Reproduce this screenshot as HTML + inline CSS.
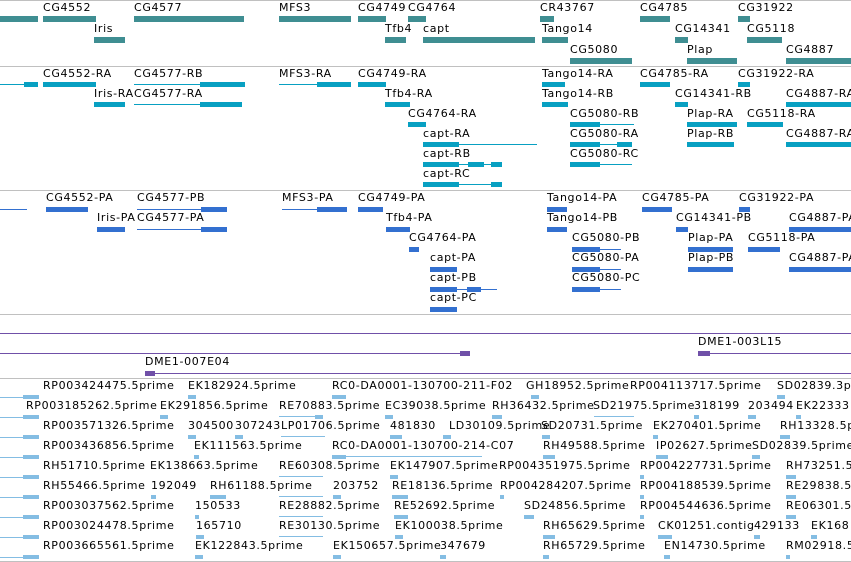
<!DOCTYPE html>
<html><head><meta charset="utf-8"><style>
html,body{margin:0;padding:0;background:#fff;}
#r{position:relative;width:851px;height:562px;overflow:hidden;background:#fff;font-family:"DejaVu Sans","Liberation Sans",sans-serif;font-size:11px;letter-spacing:0.65px;color:#000;}
#r i{position:absolute;font-style:normal;line-height:11px;white-space:nowrap;}
#r b{position:absolute;display:block;}
.g{height:1px;background:#c0c0c0;left:0;width:851px;}
.a{background:#3f8e92;height:6px;}
.c{background:#08a0c2;height:5px;}
.d{background:#3370d0;height:5px;}
.e{background:#84bde3;height:4px;}
.lc{background:#08a0c2;height:1px;}
.ld{background:#3370d0;height:1px;}
.le{background:#84bde3;height:1px;}
.p{background:#7050a8;}
</style></head><body><div id="r">
<b class="g" style="top:0"></b>
<b class="g" style="top:66px"></b>
<b class="g" style="top:190px"></b>
<b class="g" style="top:314px"></b>
<b class="g" style="top:378px"></b>
<b class="g" style="top:561px"></b>

<!-- track1 -->
<i style="left:43px;top:2px">CG4552</i><i style="left:134px;top:2px">CG4577</i><i style="left:279px;top:2px">MFS3</i><i style="left:358px;top:2px">CG4749</i><i style="left:408px;top:2px">CG4764</i><i style="left:540px;top:2px">CR43767</i><i style="left:640px;top:2px">CG4785</i><i style="left:738px;top:2px">CG31922</i>
<b class="a" style="left:0;width:38px;top:16px"></b><b class="a" style="left:43px;width:53px;top:16px"></b><b class="a" style="left:134px;width:110px;top:16px"></b><b class="a" style="left:279px;width:72px;top:16px"></b><b class="a" style="left:358px;width:28px;top:16px"></b><b class="a" style="left:408px;width:18px;top:16px"></b><b class="a" style="left:540px;width:14px;top:16px"></b><b class="a" style="left:640px;width:30px;top:16px"></b><b class="a" style="left:738px;width:12px;top:16px"></b>
<i style="left:94px;top:23px">Iris</i><i style="left:385px;top:23px">Tfb4</i><i style="left:423px;top:23px">capt</i><i style="left:542px;top:23px">Tango14</i><i style="left:675px;top:23px">CG14341</i><i style="left:747px;top:23px">CG5118</i>
<b class="a" style="left:94px;width:31px;top:37px"></b><b class="a" style="left:385px;width:21px;top:37px"></b><b class="a" style="left:423px;width:112px;top:37px"></b><b class="a" style="left:542px;width:26px;top:37px"></b><b class="a" style="left:675px;width:13px;top:37px"></b><b class="a" style="left:747px;width:35px;top:37px"></b>
<i style="left:570px;top:44px">CG5080</i><i style="left:687px;top:44px">Plap</i><i style="left:786px;top:44px">CG4887</i>
<b class="a" style="left:570px;width:62px;top:58px"></b><b class="a" style="left:687px;width:50px;top:58px"></b><b class="a" style="left:786px;width:65px;top:58px"></b>

<!-- track2 -->
<i style="left:43px;top:68px">CG4552-RA</i><i style="left:134px;top:68px">CG4577-RB</i><i style="left:279px;top:68px">MFS3-RA</i><i style="left:358px;top:68px">CG4749-RA</i><i style="left:542px;top:68px">Tango14-RA</i><i style="left:640px;top:68px">CG4785-RA</i><i style="left:738px;top:68px">CG31922-RA</i>
<b class="lc" style="left:0;width:38px;top:84px"></b><b class="c" style="left:24px;width:14px;top:82px"></b><b class="c" style="left:43px;width:53px;top:82px"></b><b class="lc" style="left:134px;width:110px;top:84px"></b><b class="c" style="left:200px;width:45px;top:82px"></b><b class="lc" style="left:279px;width:72px;top:84px"></b><b class="c" style="left:317px;width:34px;top:82px"></b><b class="c" style="left:358px;width:28px;top:82px"></b><b class="c" style="left:542px;width:23px;top:82px"></b><b class="c" style="left:640px;width:30px;top:82px"></b><b class="c" style="left:738px;width:12px;top:82px"></b>
<i style="left:94px;top:88px">Iris-RA</i><i style="left:134px;top:88px">CG4577-RA</i><i style="left:385px;top:88px">Tfb4-RA</i><i style="left:542px;top:88px">Tango14-RB</i><i style="left:675px;top:88px">CG14341-RB</i><i style="left:786px;top:88px">CG4887-RA</i>
<b class="c" style="left:94px;width:31px;top:102px"></b><b class="lc" style="left:134px;width:108px;top:104px"></b><b class="c" style="left:200px;width:42px;top:102px"></b><b class="c" style="left:385px;width:25px;top:102px"></b><b class="c" style="left:542px;width:26px;top:102px"></b><b class="c" style="left:675px;width:13px;top:102px"></b><b class="c" style="left:786px;width:65px;top:102px"></b>
<i style="left:408px;top:108px">CG4764-RA</i><i style="left:570px;top:108px">CG5080-RB</i><i style="left:687px;top:108px">Plap-RA</i><i style="left:747px;top:108px">CG5118-RA</i>
<b class="c" style="left:408px;width:18px;top:122px"></b><b class="lc" style="left:570px;width:64px;top:124px"></b><b class="c" style="left:570px;width:30px;top:122px"></b><b class="c" style="left:687px;width:50px;top:122px"></b><b class="c" style="left:747px;width:36px;top:122px"></b>
<i style="left:423px;top:128px">capt-RA</i><i style="left:570px;top:128px">CG5080-RA</i><i style="left:687px;top:128px">Plap-RB</i><i style="left:786px;top:128px">CG4887-RA</i>
<b class="lc" style="left:423px;width:114px;top:144px"></b><b class="c" style="left:423px;width:36px;top:142px"></b><b class="lc" style="left:570px;width:62px;top:144px"></b><b class="c" style="left:570px;width:30px;top:142px"></b><b class="c" style="left:617px;width:15px;top:142px"></b><b class="c" style="left:687px;width:47px;top:142px"></b><b class="c" style="left:786px;width:65px;top:142px"></b>
<i style="left:423px;top:148px">capt-RB</i><i style="left:570px;top:148px">CG5080-RC</i>
<b class="lc" style="left:423px;width:79px;top:164px"></b><b class="c" style="left:423px;width:36px;top:162px"></b><b class="c" style="left:468px;width:16px;top:162px"></b><b class="c" style="left:491px;width:11px;top:162px"></b><b class="lc" style="left:570px;width:62px;top:164px"></b><b class="c" style="left:570px;width:30px;top:162px"></b>
<i style="left:423px;top:168px">capt-RC</i>
<b class="lc" style="left:423px;width:79px;top:184px"></b><b class="c" style="left:423px;width:36px;top:182px"></b><b class="c" style="left:491px;width:11px;top:182px"></b>

<!-- track3 -->
<i style="left:46px;top:192px">CG4552-PA</i><i style="left:137px;top:192px">CG4577-PB</i><i style="left:282px;top:192px">MFS3-PA</i><i style="left:358px;top:192px">CG4749-PA</i><i style="left:547px;top:192px">Tango14-PA</i><i style="left:642px;top:192px">CG4785-PA</i><i style="left:739px;top:192px">CG31922-PA</i>
<b class="ld" style="left:0;width:27px;top:209px"></b><b class="d" style="left:46px;width:42px;top:207px"></b><b class="ld" style="left:137px;width:90px;top:209px"></b><b class="d" style="left:201px;width:26px;top:207px"></b><b class="ld" style="left:282px;width:65px;top:209px"></b><b class="d" style="left:317px;width:30px;top:207px"></b><b class="d" style="left:358px;width:25px;top:207px"></b><b class="d" style="left:547px;width:20px;top:207px"></b><b class="d" style="left:642px;width:30px;top:207px"></b><b class="d" style="left:739px;width:11px;top:207px"></b>
<i style="left:97px;top:212px">Iris-PA</i><i style="left:137px;top:212px">CG4577-PA</i><i style="left:386px;top:212px">Tfb4-PA</i><i style="left:547px;top:212px">Tango14-PB</i><i style="left:676px;top:212px">CG14341-PB</i><i style="left:789px;top:212px">CG4887-PA</i>
<b class="d" style="left:97px;width:28px;top:227px"></b><b class="ld" style="left:137px;width:90px;top:229px"></b><b class="d" style="left:201px;width:26px;top:227px"></b><b class="d" style="left:386px;width:24px;top:227px"></b><b class="d" style="left:547px;width:20px;top:227px"></b><b class="d" style="left:676px;width:12px;top:227px"></b><b class="d" style="left:789px;width:62px;top:227px"></b>
<i style="left:409px;top:232px">CG4764-PA</i><i style="left:572px;top:232px">CG5080-PB</i><i style="left:688px;top:232px">Plap-PA</i><i style="left:748px;top:232px">CG5118-PA</i>
<b class="d" style="left:409px;width:10px;top:247px"></b><b class="ld" style="left:572px;width:49px;top:249px"></b><b class="d" style="left:572px;width:28px;top:247px"></b><b class="d" style="left:688px;width:45px;top:247px"></b><b class="d" style="left:748px;width:32px;top:247px"></b>
<i style="left:430px;top:252px">capt-PA</i><i style="left:572px;top:252px">CG5080-PA</i><i style="left:688px;top:252px">Plap-PB</i><i style="left:789px;top:252px">CG4887-PA</i>
<b class="d" style="left:430px;width:27px;top:267px"></b><b class="ld" style="left:572px;width:49px;top:269px"></b><b class="d" style="left:572px;width:28px;top:267px"></b><b class="d" style="left:688px;width:45px;top:267px"></b><b class="d" style="left:789px;width:62px;top:267px"></b>
<i style="left:430px;top:272px">capt-PB</i><i style="left:572px;top:272px">CG5080-PC</i>
<b class="ld" style="left:430px;width:67px;top:289px"></b><b class="d" style="left:430px;width:27px;top:287px"></b><b class="d" style="left:467px;width:14px;top:287px"></b><b class="ld" style="left:572px;width:49px;top:289px"></b><b class="d" style="left:572px;width:28px;top:287px"></b>
<i style="left:430px;top:292px">capt-PC</i>
<b class="d" style="left:430px;width:27px;top:307px"></b>

<!-- track4 -->
<b class="p" style="left:0;width:851px;top:333px;height:1px"></b>
<b class="p" style="left:0;width:470px;top:353px;height:1px"></b>
<b class="p" style="left:698px;width:153px;top:353px;height:1px"></b>
<b class="p" style="left:145px;width:706px;top:373px;height:1px"></b>
<b class="p" style="left:460px;width:10px;top:351px;height:5px"></b>
<b class="p" style="left:145px;width:10px;top:371px;height:5px"></b>
<b class="p" style="left:698px;width:12px;top:351px;height:5px"></b>
<i style="left:145px;top:356px">DME1-007E04</i>
<i style="left:698px;top:336px">DME1-003L15</i>

<!-- track5 ESTs -->
<b class="le" style="left:0;width:38px;top:397px"></b><b class="le" style="left:0;width:38px;top:417px"></b><b class="le" style="left:0;width:38px;top:437px"></b><b class="le" style="left:0;width:38px;top:457px"></b><b class="le" style="left:0;width:38px;top:477px"></b><b class="le" style="left:0;width:38px;top:497px"></b><b class="le" style="left:0;width:38px;top:517px"></b><b class="le" style="left:0;width:38px;top:537px"></b><b class="le" style="left:0;width:38px;top:557px"></b>

<i style="left:43px;top:380px">RP003424475.5prime</i><i style="left:188px;top:380px">EK182924.5prime</i><i style="left:332px;top:380px">RC0-DA0001-130700-211-F02</i><i style="left:526px;top:380px">GH18952.5prime</i><i style="left:630px;top:380px">RP004113717.5prime</i><i style="left:777px;top:380px">SD02839.3prime</i>
<b class="e" style="left:23px;width:16px;top:395px"></b><b class="e" style="left:188px;width:8px;top:395px"></b><b class="e" style="left:332px;width:14px;top:395px"></b><b class="e" style="left:531px;width:8px;top:395px"></b><b class="e" style="left:777px;width:8px;top:395px"></b>

<i style="left:26px;top:400px">RP003185262.5prime</i><i style="left:160px;top:400px">EK291856.5prime</i><i style="left:279px;top:400px">RE70883.5prime</i><i style="left:385px;top:400px">EC39038.5prime</i><i style="left:492px;top:400px">RH36432.5prime</i><i style="left:593px;top:400px">SD21975.5prime</i><i style="left:694px;top:400px">318199</i><i style="left:748px;top:400px">203494</i><i style="left:796px;top:400px">EK22333</i>
<b class="e" style="left:23px;width:16px;top:415px"></b><b class="e" style="left:160px;width:8px;top:415px"></b><b class="le" style="left:279px;width:44px;top:416px"></b><b class="e" style="left:315px;width:8px;top:415px"></b><b class="e" style="left:385px;width:8px;top:415px"></b><b class="e" style="left:492px;width:10px;top:415px"></b><b class="le" style="left:594px;width:40px;top:416px"></b><b class="e" style="left:694px;width:5px;top:415px"></b><b class="e" style="left:748px;width:8px;top:415px"></b><b class="e" style="left:796px;width:5px;top:415px"></b>

<i style="left:43px;top:420px">RP003571326.5prime</i><i style="left:188px;top:420px">304500</i><i style="left:235px;top:420px">307243</i><i style="left:281px;top:420px">LP01706.5prime</i><i style="left:390px;top:420px">481830</i><i style="left:449px;top:420px">LD30109.5prime</i><i style="left:541px;top:420px">SD20731.5prime</i><i style="left:653px;top:420px">EK270401.5prime</i><i style="left:780px;top:420px">RH13328.5prime</i>
<b class="e" style="left:23px;width:16px;top:435px"></b><b class="e" style="left:188px;width:8px;top:435px"></b><b class="e" style="left:235px;width:8px;top:435px"></b><b class="le" style="left:281px;width:44px;top:436px"></b><b class="e" style="left:390px;width:12px;top:435px"></b><b class="e" style="left:443px;width:8px;top:435px"></b><b class="e" style="left:542px;width:8px;top:435px"></b><b class="e" style="left:653px;width:5px;top:435px"></b><b class="e" style="left:780px;width:10px;top:435px"></b>

<i style="left:43px;top:440px">RP003436856.5prime</i><i style="left:194px;top:440px">EK111563.5prime</i><i style="left:332px;top:440px">RC0-DA0001-130700-214-C07</i><i style="left:543px;top:440px">RH49588.5prime</i><i style="left:656px;top:440px">IP02627.5prime</i><i style="left:752px;top:440px">SD02839.5prime</i>
<b class="e" style="left:23px;width:16px;top:455px"></b><b class="e" style="left:194px;width:5px;top:455px"></b><b class="le" style="left:332px;width:150px;top:456px"></b><b class="e" style="left:332px;width:14px;top:455px"></b><b class="e" style="left:543px;width:12px;top:455px"></b><b class="e" style="left:656px;width:12px;top:455px"></b><b class="e" style="left:752px;width:8px;top:455px"></b>

<i style="left:43px;top:460px">RH51710.5prime</i><i style="left:150px;top:460px">EK138663.5prime</i><i style="left:279px;top:460px">RE60308.5prime</i><i style="left:390px;top:460px">EK147907.5prime</i><i style="left:499px;top:460px">RP004351975.5prime</i><i style="left:640px;top:460px">RP004227731.5prime</i><i style="left:786px;top:460px">RH73251.5prime</i>
<b class="e" style="left:23px;width:16px;top:475px"></b><b class="le" style="left:279px;width:44px;top:476px"></b><b class="e" style="left:390px;width:8px;top:475px"></b><b class="e" style="left:640px;width:4px;top:475px"></b><b class="e" style="left:786px;width:10px;top:475px"></b>

<i style="left:43px;top:480px">RH55466.5prime</i><i style="left:151px;top:480px">192049</i><i style="left:210px;top:480px">RH61188.5prime</i><i style="left:333px;top:480px">203752</i><i style="left:392px;top:480px">RE18136.5prime</i><i style="left:500px;top:480px">RP004284207.5prime</i><i style="left:640px;top:480px">RP004188539.5prime</i><i style="left:786px;top:480px">RE29838.5prime</i>
<b class="e" style="left:23px;width:16px;top:495px"></b><b class="e" style="left:151px;width:5px;top:495px"></b><b class="e" style="left:210px;width:16px;top:495px"></b><b class="le" style="left:279px;width:44px;top:496px"></b><b class="e" style="left:333px;width:8px;top:495px"></b><b class="e" style="left:392px;width:16px;top:495px"></b><b class="e" style="left:500px;width:4px;top:495px"></b><b class="e" style="left:640px;width:4px;top:495px"></b><b class="e" style="left:786px;width:10px;top:495px"></b>

<i style="left:43px;top:500px">RP003037562.5prime</i><i style="left:195px;top:500px">150533</i><i style="left:279px;top:500px">RE28882.5prime</i><i style="left:394px;top:500px">RE52692.5prime</i><i style="left:524px;top:500px">SD24856.5prime</i><i style="left:640px;top:500px">RP004544636.5prime</i><i style="left:786px;top:500px">RE06301.5prime</i>
<b class="e" style="left:23px;width:16px;top:515px"></b><b class="e" style="left:195px;width:4px;top:515px"></b><b class="le" style="left:279px;width:44px;top:516px"></b><b class="e" style="left:394px;width:14px;top:515px"></b><b class="e" style="left:524px;width:10px;top:515px"></b><b class="e" style="left:640px;width:4px;top:515px"></b><b class="e" style="left:786px;width:10px;top:515px"></b>

<i style="left:43px;top:520px">RP003024478.5prime</i><i style="left:196px;top:520px">165710</i><i style="left:279px;top:520px">RE30130.5prime</i><i style="left:395px;top:520px">EK100038.5prime</i><i style="left:543px;top:520px">RH65629.5prime</i><i style="left:658px;top:520px">CK01251.contig</i><i style="left:754px;top:520px">429133</i><i style="left:811px;top:520px">EK168</i>
<b class="e" style="left:23px;width:16px;top:535px"></b><b class="e" style="left:196px;width:8px;top:535px"></b><b class="le" style="left:279px;width:44px;top:536px"></b><b class="e" style="left:395px;width:8px;top:535px"></b><b class="e" style="left:543px;width:12px;top:535px"></b><b class="e" style="left:658px;width:14px;top:535px"></b><b class="e" style="left:754px;width:6px;top:535px"></b><b class="e" style="left:811px;width:6px;top:535px"></b>

<i style="left:43px;top:540px">RP003665561.5prime</i><i style="left:195px;top:540px">EK122843.5prime</i><i style="left:333px;top:540px">EK150657.5prime</i><i style="left:440px;top:540px">347679</i><i style="left:543px;top:540px">RH65729.5prime</i><i style="left:664px;top:540px">EN14730.5prime</i><i style="left:786px;top:540px">RM02918.5prime</i>
<b class="e" style="left:23px;width:16px;top:555px"></b><b class="e" style="left:195px;width:8px;top:555px"></b><b class="e" style="left:333px;width:8px;top:555px"></b><b class="e" style="left:440px;width:6px;top:555px"></b><b class="e" style="left:543px;width:6px;top:555px"></b><b class="e" style="left:664px;width:6px;top:555px"></b><b class="e" style="left:786px;width:4px;top:555px"></b>
</div></body></html>
